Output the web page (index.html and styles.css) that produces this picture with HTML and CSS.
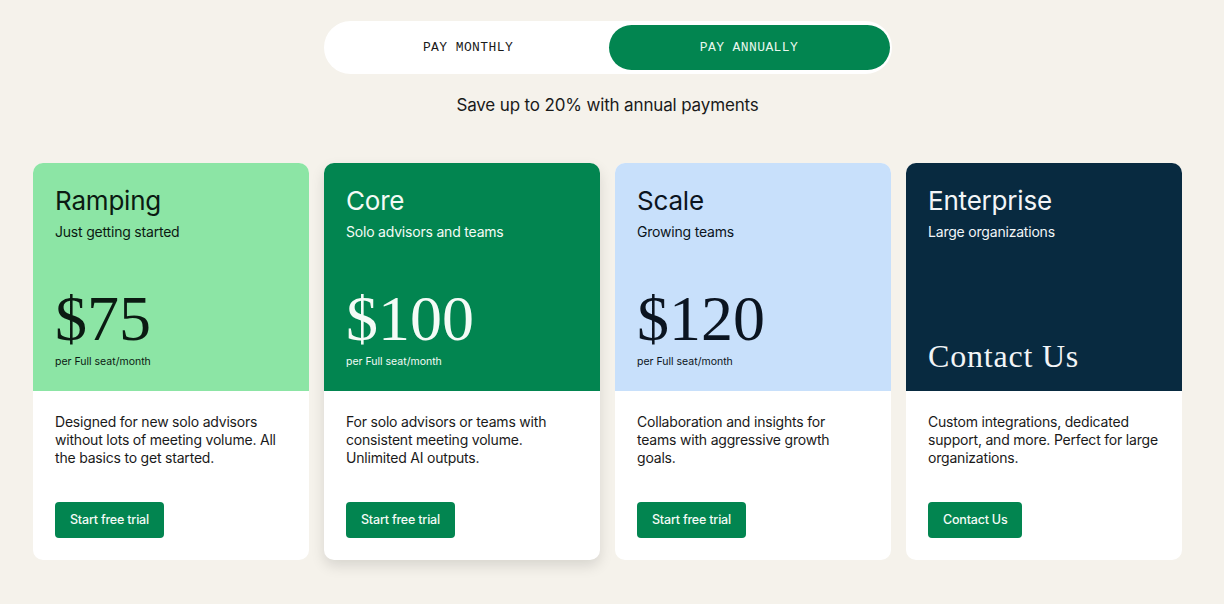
FILE: index.html
```html
<!DOCTYPE html>
<html>
<head>
<meta charset="utf-8">
<link rel="stylesheet" href="styles.css">
</head>
<body>
<main class="page">
  <div class="toggle">
    <button class="toggle-opt">PAY MONTHLY</button>
    <button class="toggle-opt active">PAY ANNUALLY</button>
  </div>
  <p class="save">Save up to 20% with annual payments</p>
  <section class="plans">
    <article class="card">
      <div class="card-top ramping">
        <h2 class="name">Ramping</h2>
        <p class="tag">Just getting started</p>
        <div class="price">$75</div>
        <p class="unit">per Full seat/month</p>
      </div>
      <div class="card-body">
        <p class="desc">Designed for new solo advisors without lots of meeting volume. All the basics to get started.</p>
        <a class="btn">Start free trial</a>
      </div>
    </article>
    <article class="card featured">
      <div class="card-top core">
        <h2 class="name">Core</h2>
        <p class="tag">Solo advisors and teams</p>
        <div class="price">$100</div>
        <p class="unit">per Full seat/month</p>
      </div>
      <div class="card-body">
        <p class="desc">For solo advisors or teams with consistent meeting volume. Unlimited AI outputs.</p>
        <a class="btn">Start free trial</a>
      </div>
    </article>
    <article class="card">
      <div class="card-top scale">
        <h2 class="name">Scale</h2>
        <p class="tag">Growing teams</p>
        <div class="price">$120</div>
        <p class="unit">per Full seat/month</p>
      </div>
      <div class="card-body">
        <p class="desc">Collaboration and insights for<br>teams with aggressive growth<br>goals.</p>
        <a class="btn">Start free trial</a>
      </div>
    </article>
    <article class="card">
      <div class="card-top enterprise">
        <h2 class="name">Enterprise</h2>
        <p class="tag">Large organizations</p>
        <div class="contact">Contact Us</div>
      </div>
      <div class="card-body">
        <p class="desc">Custom integrations, dedicated support, and more. Perfect for large organizations.</p>
        <a class="btn">Contact Us</a>
      </div>
    </article>
  </section>
</main>
</body>
</html>
```

FILE: styles.css
```css
* { box-sizing: border-box; }
html, body { margin: 0; padding: 0; }
body {
  background: #f5f2eb;
  font-family: Inter, "Noto Sans", sans-serif;
  color: #1a1a1a;
  width: 1224px;
  height: 604px;
  overflow: hidden;
}
.page {
  padding: 21px 42px 0 33px;
  display: flex;
  flex-direction: column;
  align-items: center;
}
.toggle {
  width: 568px;
  height: 53px;
  background: #fff;
  border-radius: 27px;
  padding: 4px 2px 4px 4px;
  display: flex;
}
.toggle-opt {
  flex: 1;
  border: 0;
  background: transparent;
  border-radius: 23px;
  font-family: "Liberation Mono", "DejaVu Sans Mono", monospace;
  font-size: 13px;
  letter-spacing: 0.4px;
  color: #1a1a1a;
  padding: 0;
}
.toggle-opt.active {
  background: #028550;
  color: #e9f7ee;
}
.save {
  margin: 19px 0 0;
  font-size: 17px;
  line-height: 24px;
  letter-spacing: -0.15px;
  color: #1a1a1a;
}
.plans {
  margin-top: 46px;
  align-self: stretch;
  display: grid;
  grid-template-columns: repeat(4, 276px);
  gap: 15px;
}
.card {
  background: #fff;
  border-radius: 10px;
  overflow: hidden;
  height: 397px;
  display: flex;
  flex-direction: column;
}
.card.featured {
  box-shadow: 0 6px 14px rgba(0, 0, 0, 0.12);
}
.card-top {
  height: 228px;
  padding: 22px 22px 0 22px;
  display: flex;
  flex-direction: column;
}
.ramping { background: #8ce5a5; color: #0b1a12; }
.core { background: #028550; color: #f4fbf6; }
.scale { background: #c8e0fb; color: #0b1420; }
.enterprise { background: #082a40; color: #f2f5f7; }
.name {
  margin: 0;
  font-size: 26px;
  font-weight: 400;
  line-height: 32px;
  letter-spacing: -0.2px;
}
.tag {
  margin: 5px 0 0;
  font-size: 14px;
  line-height: 20px;
  letter-spacing: -0.2px;
}
.price {
  margin-top: 44px;
  font-family: "Liberation Serif", "DejaVu Serif", serif;
  font-size: 64px;
  line-height: 66px;
  letter-spacing: 0;
}
.unit {
  margin: 3px 0 0;
  font-size: 10.5px;
  line-height: 14px;
}
.contact {
  margin-top: auto;
  margin-bottom: 17px;
  font-family: "Liberation Serif", "DejaVu Serif", serif;
  font-size: 32px;
  line-height: 36px;
  letter-spacing: 0.8px;
}
.card-body {
  flex: 1;
  padding: 22px 22px 0 22px;
  display: flex;
  flex-direction: column;
}
.desc {
  margin: 0;
  font-size: 14px;
  line-height: 18px;
  letter-spacing: -0.2px;
  color: #1a1a1a;
}
.btn {
  margin-top: auto;
  margin-bottom: 22px;
  align-self: flex-start;
  height: 36px;
  padding: 0 15px;
  background: #028550;
  color: #f4fbf6;
  border-radius: 4px;
  font-size: 12.5px;
  line-height: 36px;
  font-weight: 500;
  letter-spacing: -0.2px;
  text-decoration: none;
}
```
